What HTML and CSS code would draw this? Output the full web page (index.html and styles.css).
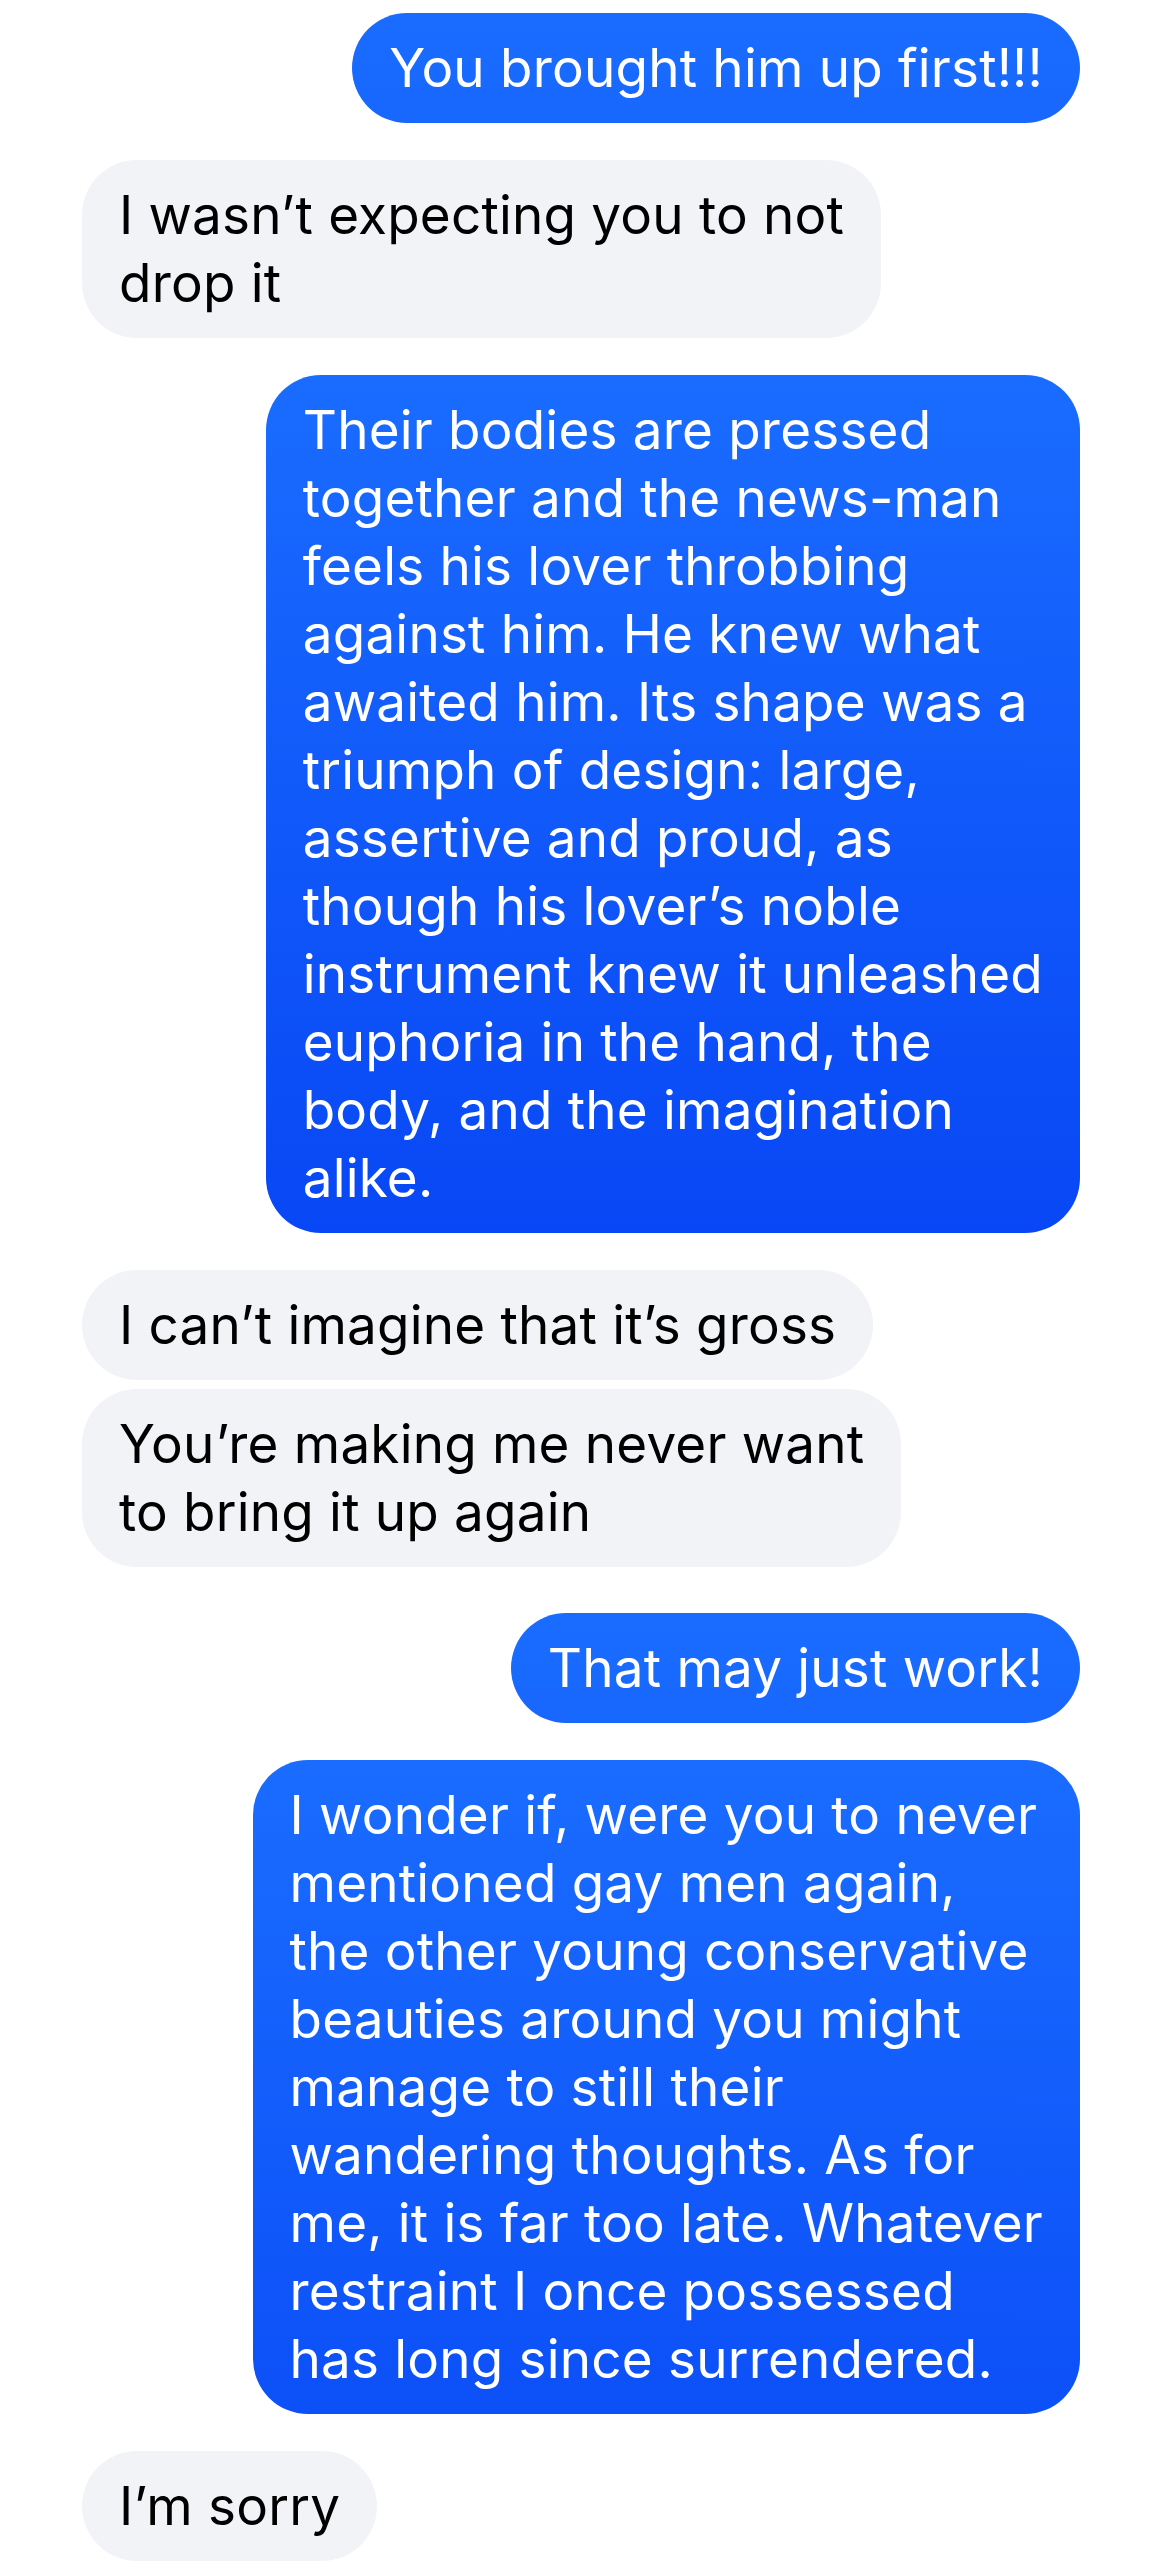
FILE: index.html
```html
<!DOCTYPE html>
<html>
<head>
<meta charset="utf-8">
<link rel="stylesheet" href="styles.css">
</head>
<body>
<div class="thread">
  <div class="msg sent">You brought him up first!!!</div>
  <div class="msg recv">I wasn’t expecting you to not<br>drop it</div>
  <div class="msg sent">Their bodies are pressed<br>together and the news-man<br>feels his lover throbbing<br>against him. He knew what<br>awaited him. Its shape was a<br>triumph of design: large,<br>assertive and proud, as<br>though his lover’s noble<br>instrument knew it unleashed<br>euphoria in the hand, the<br>body, and the imagination<br>alike.</div>
  <div class="msg recv">I can’t imagine that it’s gross</div>
  <div class="msg recv cont">You’re making me never want<br>to bring it up again</div>
  <div class="msg sent wide-gap">That may just work!</div>
  <div class="msg sent">I wonder if, were you to never<br>mentioned gay men again,<br>the other young conservative<br>beauties around you might<br>manage to still their<br>wandering thoughts. As for<br>me, it is far too late. Whatever<br>restraint I once possessed<br>has long since surrendered.</div>
  <div class="msg recv">I’m sorry</div>
</div>
</body>
</html>
```
FILE: styles.css
```css
html, body {
  margin: 0;
  padding: 0;
  background: #ffffff;
}
.thread {
  display: flex;
  flex-direction: column;
  padding: 13px 86px 0 82px;
  font-family: Inter, "Noto Sans", sans-serif;
  font-size: 53px;
  line-height: 68px;
  letter-spacing: 0.2px;
}
.msg {
  padding: 21px 37px;
  border-radius: 55px;
  white-space: nowrap;
  margin-top: 37px;
}
.msg:first-child {
  margin-top: 0;
}
.sent {
  align-self: flex-end;
  color: #ffffff;
  background: linear-gradient(180deg, #1a6cff 0px, #0847f5 860px);
}
.recv {
  align-self: flex-start;
  color: #000000;
  background: #f2f3f7;
}
.cont {
  margin-top: 9px;
}
.wide-gap {
  margin-top: 46px;
}
```
